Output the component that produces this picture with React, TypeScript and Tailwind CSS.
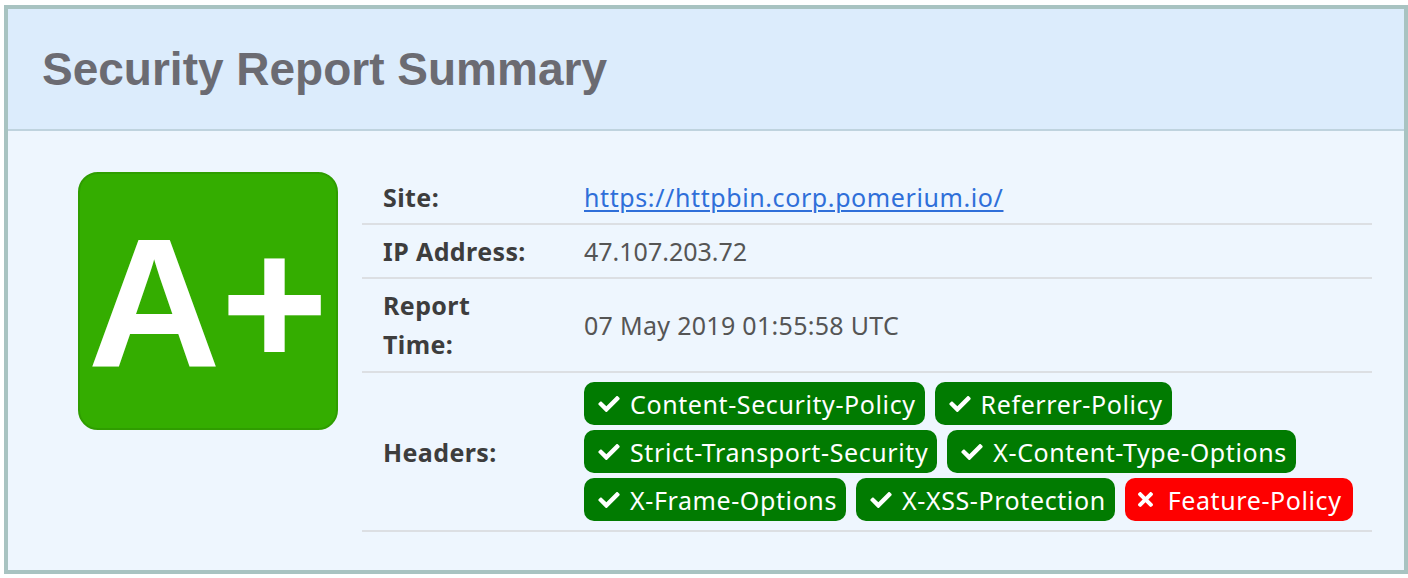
import React from 'react';

const CheckIcon = () => (
  <svg viewBox="0 64 512 384" className="w-[22px] h-[16px] shrink-0" fill="currentColor">
    <path d="M173.898 439.404l-166.4-166.4c-9.997-9.997-9.997-26.206 0-36.204l36.203-36.204c9.997-9.998 26.207-9.998 36.204 0L192 312.69 432.095 72.596c9.997-9.997 26.207-9.997 36.204 0l36.203 36.204c9.997 9.997 9.997 26.206 0 36.204l-294.4 294.401c-9.998 9.997-26.207 9.997-36.204-.001z" />
  </svg>
);

const CrossIcon = () => (
  <svg viewBox="0 80 352 352" className="w-[15px] h-[15px] shrink-0" fill="currentColor">
    <path d="M242.72 256l100.07-100.07c12.28-12.28 12.28-32.19 0-44.48l-22.24-22.24c-12.28-12.28-32.19-12.28-44.48 0L176 189.28 75.93 89.21c-12.28-12.28-32.19-12.28-44.48 0L9.21 111.45c-12.28 12.28-12.28 32.19 0 44.48L109.28 256 9.21 356.07c-12.28 12.28-12.28 32.19 0 44.48l22.24 22.24c12.28 12.28 32.2 12.28 44.48 0L176 322.72l100.07 100.07c12.28 12.28 32.2 12.28 44.48 0l22.24-22.24c12.28-12.28 12.28-32.19 0-44.48L242.72 256z" />
  </svg>
);

const Badge = ({ label, ok = true }: { label: string; ok?: boolean }) =>
  ok ? (
    <span className="inline-flex items-center h-[43px] rounded-[10px] bg-[#017b01] text-white pl-[14px] pr-[9px] gap-[10px] tracking-[0.6px]">
      <CheckIcon />
      <span>{label}</span>
    </span>
  ) : (
    <span className="inline-flex items-center h-[43px] rounded-[10px] bg-[#fe0000] text-white pl-[13px] pr-[11px] gap-[15px] tracking-[0.6px]">
      <CrossIcon />
      <span>{label}</span>
    </span>
  );

const rows = [
  ['Content-Security-Policy', 'Referrer-Policy'],
  ['Strict-Transport-Security', 'X-Content-Type-Options'],
  ['X-Frame-Options', 'X-XSS-Protection'],
];

export default function App() {
  return (
    <div className="pt-[5px] pl-[4px] bg-white">
      <div className="w-[1404px] h-[569px] border-4 border-[#a8c3c1] bg-[#eef6fe] flex flex-col">
        <div className="h-[122px] shrink-0 bg-[#dcecfc] border-b-2 border-[#bfd3de] flex items-center pl-[34px]">
          <h1 className="font-['Liberation_Sans',Arial,sans-serif] font-bold text-[46px] leading-none text-[#6b6b72]">
            Security Report Summary
          </h1>
        </div>

        <div className="flex items-start pt-[40px] pl-[70px] pr-[32px] font-['Noto_Sans',sans-serif] text-[25px] leading-[38px]">
          <div className="mt-[1px] w-[260px] h-[258px] shrink-0 rounded-[20px] bg-[#34ad00] border-2 border-[#2f9d00] flex items-center justify-center">
            <span className="font-['Liberation_Sans',Arial,sans-serif] font-bold text-[184px] leading-none text-white mt-[2px]">
              A+
            </span>
          </div>

          <div className="ml-[24px] flex-1 grid grid-cols-[222px_1fr]">
            <div className="py-[7px] pl-[21px] border-b-2 border-[#dcdfe3] font-bold text-[#3d3d3d] tracking-[0.4px]">Site:</div>
            <div className="py-[7px] border-b-2 border-[#dcdfe3]">
              <a href="#" className="text-[#2f6fd9] underline underline-offset-[3px] decoration-[2px] tracking-[0.6px]">
                https://httpbin.corp.pomerium.io/
              </a>
            </div>

            <div className="py-[7px] pl-[21px] border-b-2 border-[#dcdfe3] font-bold text-[#3d3d3d] tracking-[0.4px]">IP Address:</div>
            <div className="py-[7px] border-b-2 border-[#dcdfe3] text-[#555555]">47.107.203.72</div>

            <div className="py-[7px] pl-[21px] border-b-2 border-[#dcdfe3] font-bold text-[#3d3d3d] leading-[39px] tracking-[0.4px]">
              Report
              <br />
              Time:
            </div>
            <div className="py-[7px] border-b-2 border-[#dcdfe3] text-[#555555] flex items-center tracking-[0.3px]">
              07 May 2019 01:55:58 UTC
            </div>

            <div className="pt-[9px] pb-[9px] pl-[21px] border-b-2 border-[#dcdfe3] font-bold text-[#3d3d3d] flex items-center tracking-[0.4px]">
              Headers:
            </div>
            <div className="pt-[9px] pb-[9px] border-b-2 border-[#dcdfe3] flex flex-col gap-[5px]">
              {rows.map((r, i) => (
                <div key={i} className="flex gap-[10px]">
                  {r.map((h) => (
                    <Badge key={h} label={h} />
                  ))}
                  {i === 2 && <Badge label="Feature-Policy" ok={false} />}
                </div>
              ))}
            </div>
          </div>
        </div>
      </div>
    </div>
  );
}
